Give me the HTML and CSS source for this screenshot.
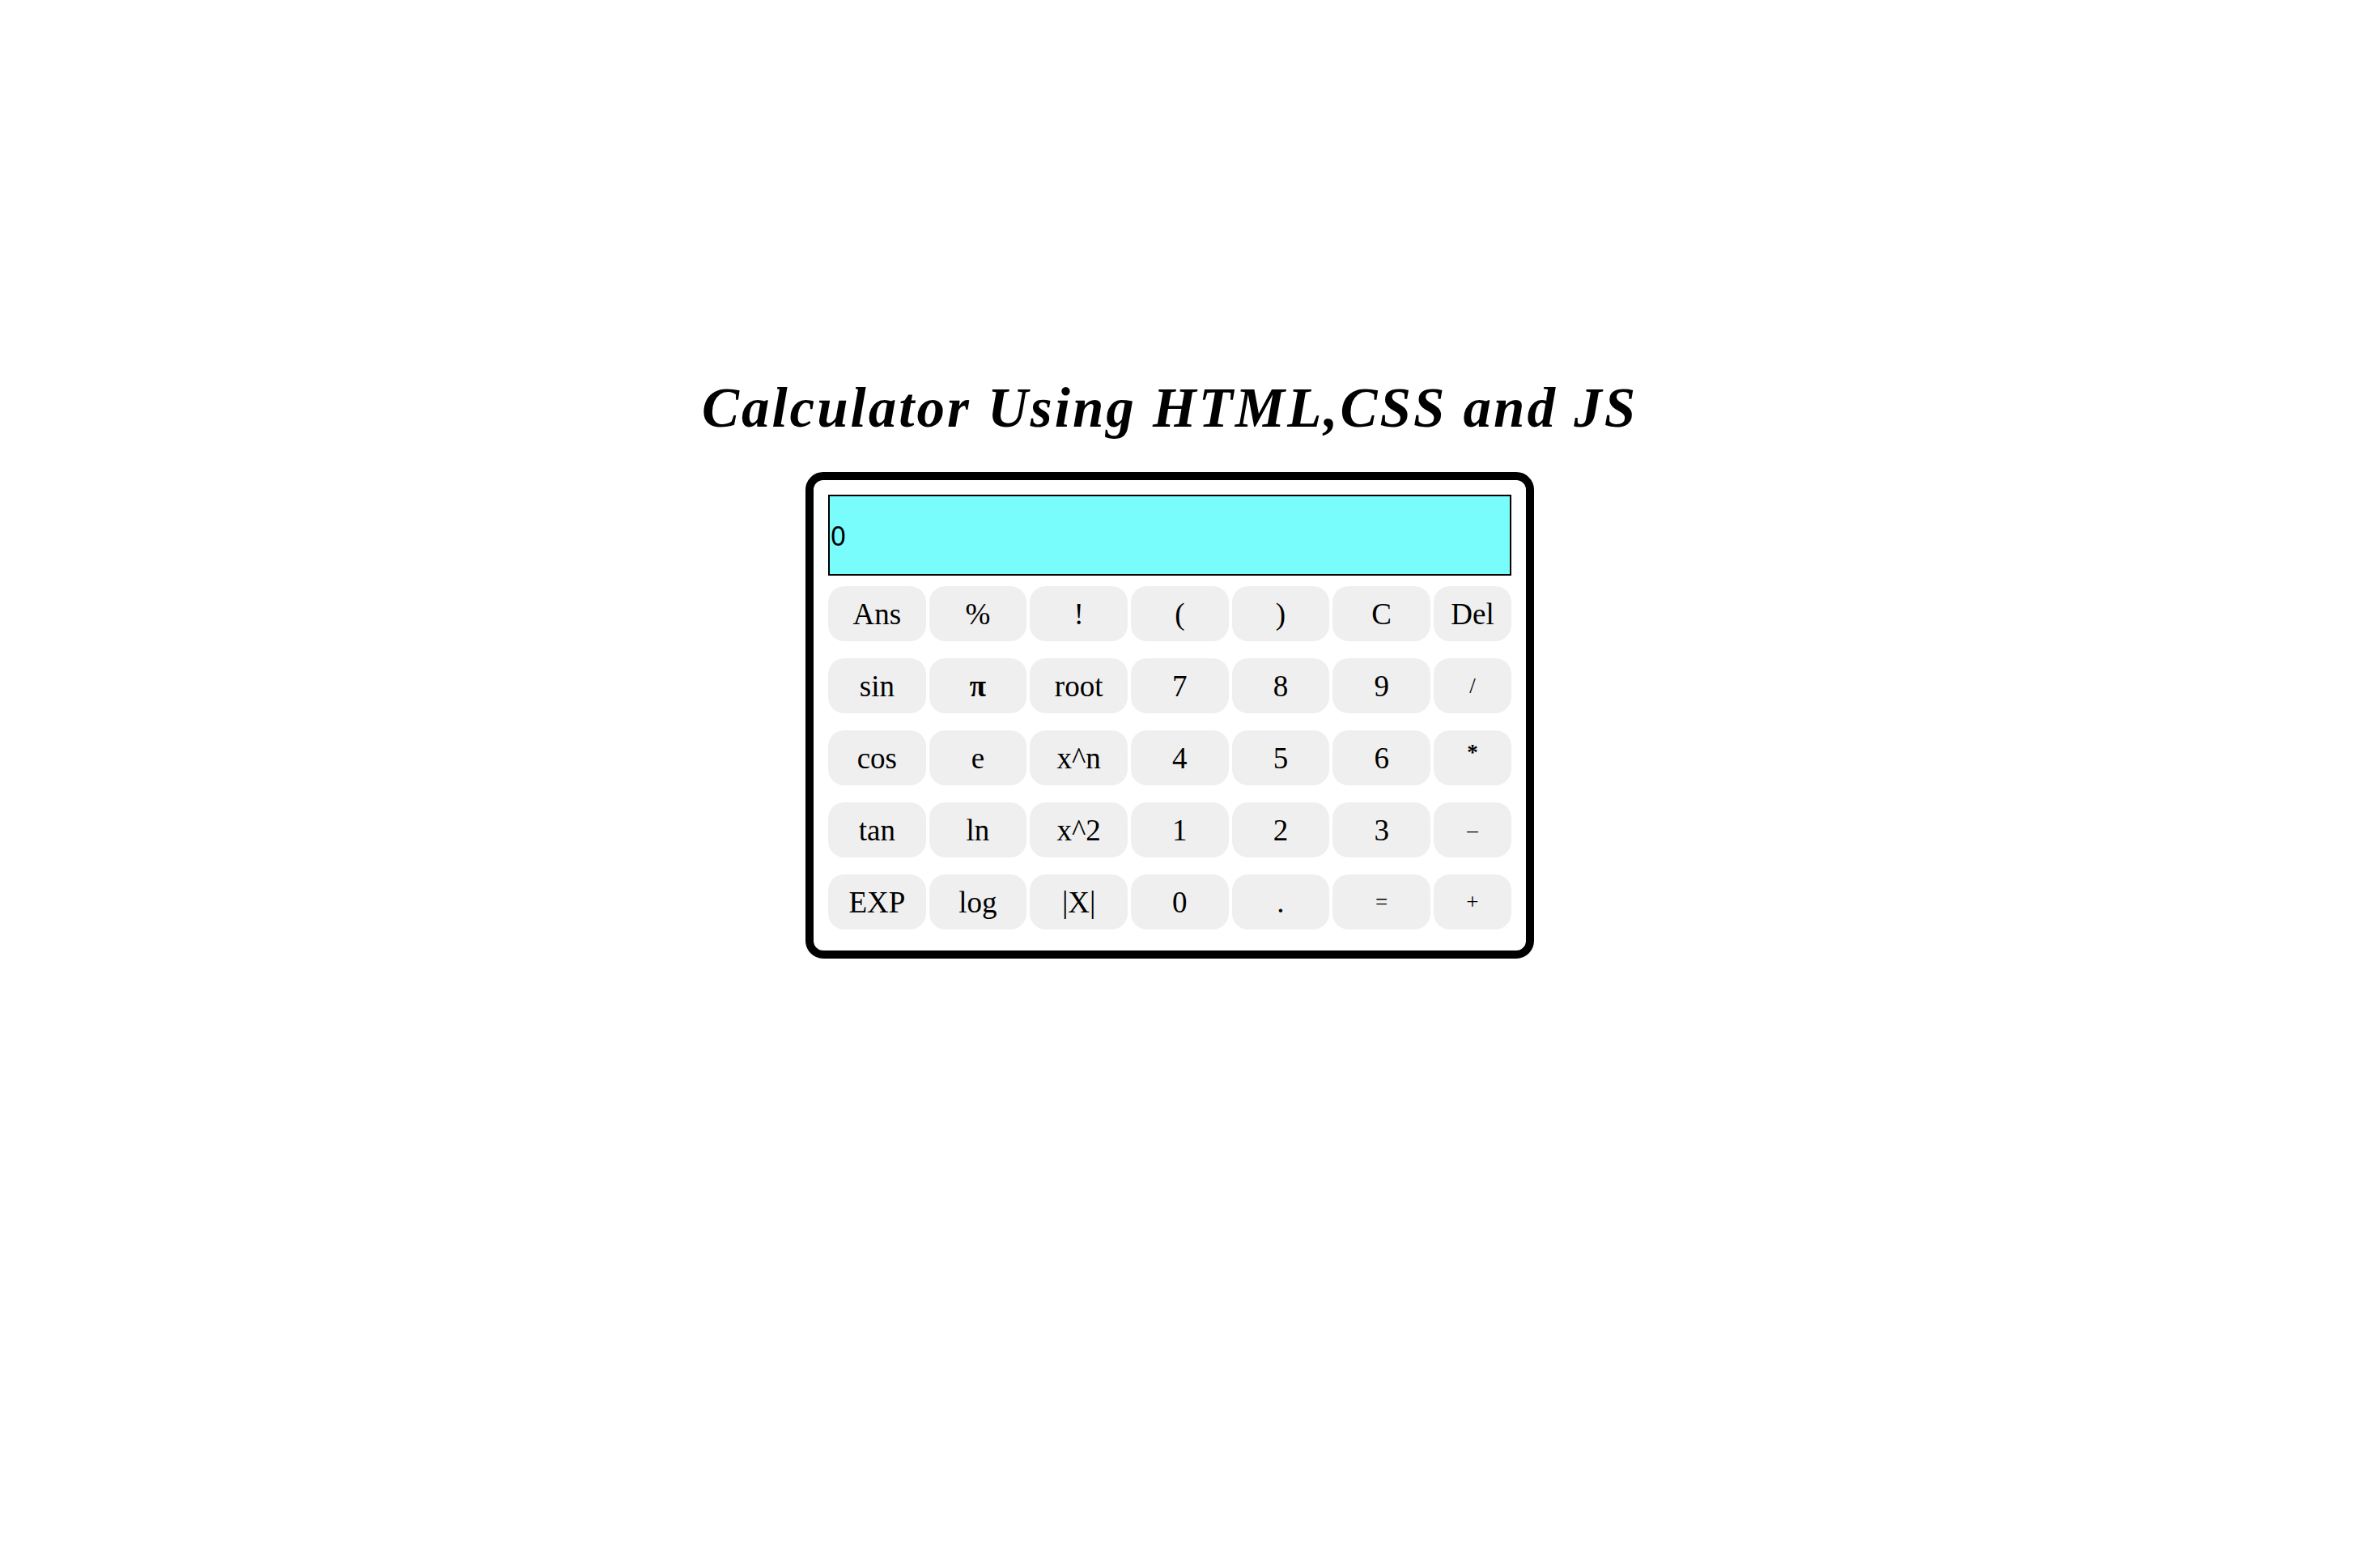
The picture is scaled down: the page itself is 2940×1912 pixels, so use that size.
FILE: index.html
```html
<!DOCTYPE html>
<html>
<head>
<meta charset="utf-8">
<title>Calculator</title>
<link rel="stylesheet" href="styles.css">
</head>
<body>
<div class="page">
  <h1 class="title">Calculator Using HTML,CSS and JS</h1>
  <div class="calc">
    <input class="display" type="text" value="0" readonly>
    <div class="keys">
      <button class="key">Ans</button>
      <button class="key">%</button>
      <button class="key">!</button>
      <button class="key">(</button>
      <button class="key">)</button>
      <button class="key">C</button>
      <button class="key">Del</button>
      <button class="key">sin</button>
      <button class="key key-b">π</button>
      <button class="key">root</button>
      <button class="key">7</button>
      <button class="key">8</button>
      <button class="key">9</button>
      <button class="key key-sm">/</button>
      <button class="key">cos</button>
      <button class="key">e</button>
      <button class="key">x^n</button>
      <button class="key">4</button>
      <button class="key">5</button>
      <button class="key">6</button>
      <button class="key key-sm key-star">*</button>
      <button class="key">tan</button>
      <button class="key">ln</button>
      <button class="key">x^2</button>
      <button class="key">1</button>
      <button class="key">2</button>
      <button class="key">3</button>
      <button class="key key-sm">–</button>
      <button class="key">EXP</button>
      <button class="key">log</button>
      <button class="key">|X|</button>
      <button class="key">0</button>
      <button class="key">.</button>
      <button class="key key-sm">=</button>
      <button class="key key-sm">+</button>
    </div>
  </div>
</div>
</body>
</html>
```

FILE: styles.css
```css
html, body {
  margin: 0;
  padding: 0;
  background: #ffffff;
}

.page {
  padding-top: 464px;
  padding-right: 50px;
  display: flex;
  flex-direction: column;
  align-items: center;
  font-family: "Liberation Serif", "DejaVu Serif", serif;
}

.title {
  margin: 0 0 39px 0;
  font-size: 69px;
  line-height: 80px;
  letter-spacing: 3px;
  font-style: italic;
  font-weight: bold;
  color: #000;
}

.calc {
  box-sizing: border-box;
  width: 900px;
  border: 10px solid #000;
  border-radius: 22px;
  padding: 18px 18px 26px 18px;
  background: #fff;
}

.display {
  display: block;
  box-sizing: border-box;
  width: 100%;
  height: 100px;
  margin: 0 0 13px 0;
  padding: 0 0 0 1px;
  border: 2px solid #000;
  background: #78fcfc;
  font-family: "Noto Sans", "Open Sans", sans-serif;
  font-size: 33px;
  color: #000;
  outline: none;
}

.keys {
  display: grid;
  grid-template-columns: repeat(6, 1fr) 96px;
  grid-auto-rows: 68px;
  column-gap: 4px;
  row-gap: 21px;
}

.key {
  border: none;
  border-radius: 20px;
  background: #efefef;
  color: #000;
  font-family: "Liberation Serif", "DejaVu Serif", serif;
  font-size: 37px;
  padding: 0;
  margin: 0;
}

.key-b {
  font-weight: bold;
}

.key-sm {
  font-size: 27px;
}

.key-star {
  padding-bottom: 14px;
  font-weight: bold;
}
```
